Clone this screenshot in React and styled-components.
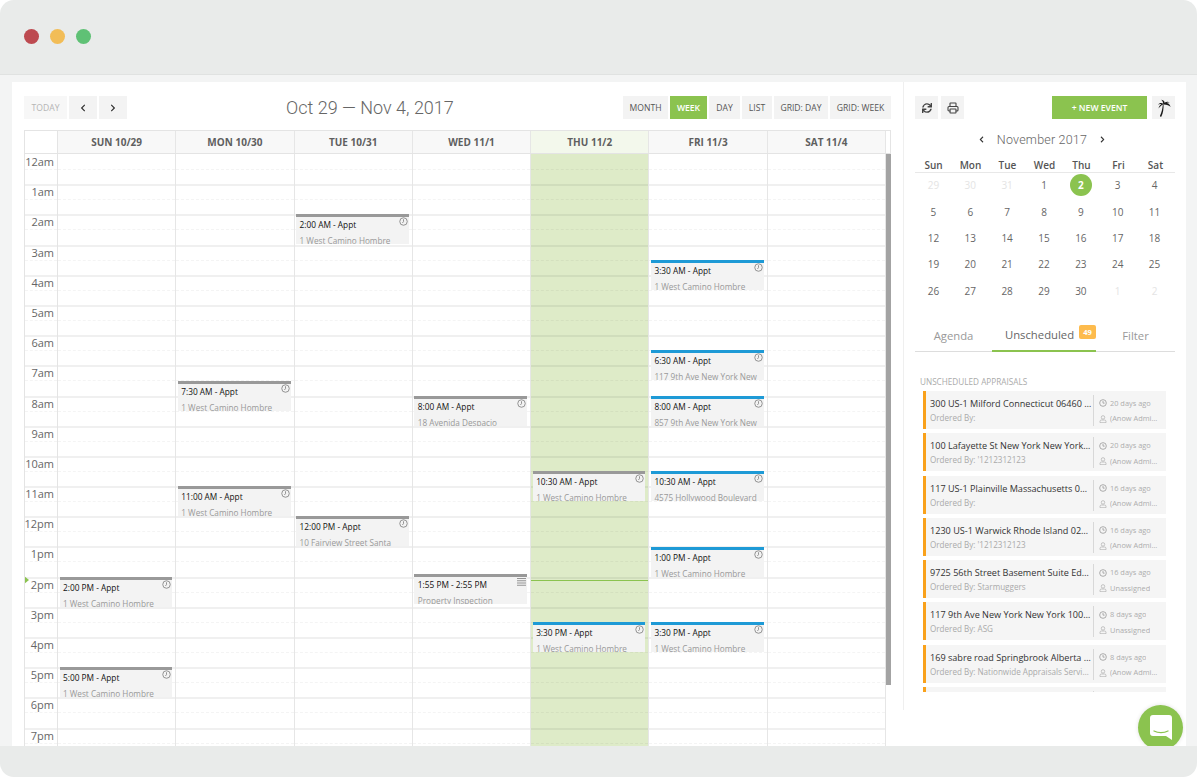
import React from 'react';
import styled, { createGlobalStyle } from 'styled-components';
import { FaSync, FaChevronLeft, FaChevronRight } from 'react-icons/fa';
import { Printer } from 'lucide-react';

const GlobalStyle = createGlobalStyle`
  html, body { margin: 0; padding: 0; background: #fff; }
  * { box-sizing: border-box; }
  body { font-family: "Open Sans", "Liberation Sans", sans-serif; }
`;

const HOUR = 30.2;
const hours = ['12am','1am','2am','3am','4am','5am','6am','7am','8am','9am','10am','11am','12pm','1pm','2pm','3pm','4pm','5pm','6pm','7pm','8pm','9pm','10pm','11pm'];

const Windowed = styled.div`
  position: relative;
  width: 1197px;
  height: 777px;
  display: flex;
  flex-direction: column;
  background: #e9ebea;
  border-radius: 14px;
  overflow: hidden;
`;

const TitleBar = styled.div`
  height: 75px;
  flex: none;
  display: flex;
  align-items: center;
  gap: 11px;
  padding: 0 24px 2px;
  border-bottom: 1px solid #e0e2e1;
`;

const Dot = styled.span`
  width: 15px;
  height: 15px;
  border-radius: 50%;
  background: ${p => p.$color};
`;

const Stage = styled.div`
  flex: none;
  height: 671px;
  background: #f3f4f4;
  padding: 7px 11px 0 12px;
`;

const Panel = styled.div`
  height: 664px;
  background: #fff;
  display: flex;
  overflow: hidden;
`;

const Main = styled.div`
  width: 891px;
  flex: none;
  padding: 14px 12px 0 12px;
  display: flex;
  flex-direction: column;
`;

const Toolbar = styled.div`
  display: flex;
  align-items: center;
  height: 23px;
  flex: none;
  margin-bottom: 11px;
`;

const Group = styled.div`
  display: flex;
  gap: 2px;
  width: ${p => p.$width || 'auto'};
`;

const ToolButton = styled.button`
  height: 23px;
  width: ${p => p.$width}px;
  border: 0;
  padding: 0;
  display: flex;
  align-items: center;
  justify-content: center;
  font-family: "Open Sans", sans-serif;
  font-size: 8.6px;
  color: ${p => (p.$active ? '#fff' : p.$muted ? '#b5b5b5' : '#555')};
  font-weight: ${p => (p.$active ? 600 : 400)};
  background: ${p => (p.$active ? '#8bc34f' : p.$muted ? '#f7f7f7' : '#f3f3f3')};
`;

const RangeTitle = styled.div`
  flex: 1;
  font-family: Roboto, sans-serif;
  font-weight: 300;
  font-size: 18px;
  line-height: 21px;
  color: #666;
`;

const Grid = styled.div`
  flex: 1;
  min-height: 0;
  border-top: 1px solid #e4e4e4;
  border-left: 1px solid #e4e4e4;
  overflow: hidden;
`;

const HeadRow = styled.div`
  display: flex;
  height: 23px;
  border-bottom: 1px solid #e4e4e4;
  border-right: 1px solid #e4e4e4;
`;

const Corner = styled.div`
  width: 33px;
  flex: none;
  border-right: 1px solid #e4e4e4;
`;

const HeadCell = styled.div`
  flex: 1 1 0;
  display: flex;
  align-items: center;
  justify-content: center;
  background: ${p => (p.$today ? '#f3f8ec' : '#f8f8f8')};
  border-right: 1px solid #e6e6e6;
  font-size: 10px;
  font-weight: 700;
  color: #5f5f5f;
`;

const HeadGap = styled.div`
  width: 4px;
  flex: none;
`;

const BodyRow = styled.div`
  display: flex;
  position: relative;
`;

const TimeColumn = styled.div`
  width: 33px;
  flex: none;
  border-right: 1px solid #e4e4e4;
`;

const Slot = styled.div`
  height: ${HOUR}px;
  &:not(:first-child) {
    box-shadow: inset 0 2px 0 rgba(0, 0, 0, 0.06);
  }
  &::before {
    content: '';
    display: block;
    height: 15px;
    border-bottom: 1px dashed rgba(0, 0, 0, 0.045);
  }
`;

const TimeSlot = styled(Slot)`
  position: relative;
`;

const TimeLabel = styled.span`
  position: absolute;
  top: 0;
  right: 3px;
  font-size: 11px;
  line-height: 15px;
  color: #666;
`;

const DayColumn = styled.div`
  flex: 1 1 0;
  min-width: 0;
  position: relative;
  border-right: 1px solid #e6e6e6;
  background: ${p => (p.$today ? '#deebc8' : '#fff')};
`;

const Scroll = styled.div`
  width: 5px;
  flex: none;
  height: 531px;
  background: #a3a3a3;
`;

const NowMarker = styled.div`
  position: absolute;
  left: -1px;
  top: 422px;
  width: 0;
  height: 0;
  border-left: 5px solid #8bc34f;
  border-top: 4px solid transparent;
  border-bottom: 4px solid transparent;
`;

const NowLine = styled.div`
  position: absolute;
  left: 0;
  right: 0;
  top: 426px;
  height: 1px;
  background: #8bc34f;
`;

const Event = styled.div`
  position: absolute;
  left: 1.5px;
  right: 3px;
  height: 30px;
  padding: 2px 0 0 3.5px;
  background: #f3f3f3;
  border-top: 3px solid ${p => (p.$blue ? '#1e9ad6' : '#999')};
  overflow: hidden;
`;

const EventTime = styled.div`
  font-size: 8.3px;
  line-height: 12px;
  color: #111;
  white-space: nowrap;
`;

const EventPlace = styled.div`
  font-size: 8.2px;
  line-height: 12px;
  margin-top: 4px;
  color: #999;
  white-space: nowrap;
`;

const EventIcon = styled.svg`
  position: absolute;
  right: 1px;
  top: 0;
  width: 9px;
  height: 9px;
  color: #808080;
`;

const Side = styled.div`
  width: 283px;
  flex: none;
  height: 628px;
  border-left: 1px solid #efefef;
  padding: 14px 11px 0 11px;
  display: flex;
  flex-direction: column;
`;

const SideTools = styled.div`
  display: flex;
  height: 23px;
  gap: 3px;
  flex: none;
`;

const IconButton = styled.button`
  width: 23px;
  height: 23px;
  border: 0;
  padding: 0;
  display: flex;
  align-items: center;
  justify-content: center;
  background: #f3f3f3;
  color: #444;
`;

const NewEvent = styled.button`
  margin-left: auto;
  margin-right: 2px;
  width: 95px;
  height: 23px;
  border: 0;
  background: #8bc34f;
  color: #fff;
  font-family: "Open Sans", sans-serif;
  font-size: 8.6px;
  font-weight: 600;
`;

const MonthHead = styled.div`
  display: flex;
  justify-content: center;
  align-items: center;
  gap: 12px;
  margin-top: 10px;
  height: 20px;
  color: #333;
  padding-right: 6px;
  flex: none;
`;

const MonthName = styled.span`
  font-family: Roboto, sans-serif;
  font-weight: 300;
  font-size: 12.5px;
  color: #666;
  letter-spacing: 0.2px;
`;

const Weekdays = styled.div`
  display: grid;
  grid-template-columns: repeat(7, 1fr);
  margin-top: 9px;
  padding-right: 1px;
  border-bottom: 1px solid #e8e8e8;
  font-size: 10px;
  line-height: 14px;
  font-weight: 600;
  color: #555;
  text-align: center;
  flex: none;
`;

const Days = styled.div`
  display: grid;
  grid-template-columns: repeat(7, 1fr);
  grid-auto-rows: 26.4px;
  margin: -1px 2px 0 0;
  font-size: 10px;
  text-align: center;
  color: #666;
  flex: none;
`;

const DayCell = styled.div`
  display: flex;
  align-items: center;
  justify-content: center;
  color: ${p => (p.$dim ? '#e4e4e4' : '#666')};
`;

const TodayBadge = styled.span`
  width: 22px;
  height: 22px;
  border-radius: 50%;
  background: #8bc34f;
  color: #fff;
  font-weight: 700;
  display: flex;
  align-items: center;
  justify-content: center;
`;

const Tabs = styled.div`
  display: grid;
  grid-template-columns: 77px 104px 1fr;
  margin-top: 17px;
  height: 31px;
  border-bottom: 1px solid #ddd;
  flex: none;
`;

const Tab = styled.div`
  position: relative;
  display: flex;
  align-items: center;
  justify-content: center;
  padding-bottom: 2px;
  padding-right: ${p => (p.$active ? '9px' : '0')};
  font-size: 11.3px;
  color: ${p => (p.$active ? '#666' : '#999')};
  height: 31px;
  border-bottom: ${p => (p.$active ? '2px solid #8bc34f' : '0')};
`;

const Count = styled.span`
  position: absolute;
  top: 4px;
  right: 0;
  width: 17px;
  height: 14px;
  border-radius: 2px;
  background: #fdbb4d;
  color: #fff;
  font-size: 7.5px;
  font-weight: 700;
  display: flex;
  align-items: center;
  justify-content: center;
`;

const ListTitle = styled.div`
  margin: 24px 0 0 5px;
  font-size: 8.2px;
  line-height: 11px;
  color: #aaa;
  flex: none;
`;

const List = styled.div`
  margin: 4px 9px 0 8px;
  display: flex;
  flex-direction: column;
  gap: 4.3px;
  height: 301px;
  overflow: hidden;
  flex: none;
`;

const Card = styled.div`
  flex: none;
  height: 38px;
  display: flex;
  background: #f5f5f5;
  border-left: 3px solid #f9a11b;
  padding: 4px 0 3px;
`;

const CardMain = styled.div`
  width: 168px;
  flex: none;
  padding: 2px 0 0 4px;
  border-right: 1px solid #d8d8d8;
`;

const Address = styled.div`
  font-size: 9.1px;
  line-height: 13px;
  color: #333;
  white-space: nowrap;
  overflow: hidden;
  text-overflow: ellipsis;
  padding-right: 1px;
`;

const OrderedBy = styled.div`
  font-size: 8.1px;
  line-height: 12px;
  margin-top: 2px;
  color: #aaa;
  white-space: nowrap;
  overflow: hidden;
  text-overflow: ellipsis;
  padding-right: 2px;
`;

const CardMeta = styled.div`
  flex: 1;
  min-width: 0;
  padding: 2px 6px 0 5px;
`;

const MetaLine = styled.div`
  display: flex;
  align-items: center;
  gap: 3px;
  font-size: 7.4px;
  line-height: 13px;
  margin-bottom: 2.5px;
  color: #adadad;
  white-space: nowrap;
  overflow: hidden;
`;

const MetaText = styled.span`
  overflow: hidden;
  text-overflow: ellipsis;
`;

const Fab = styled.div`
  position: absolute;
  left: 1138px;
  top: 705px;
  width: 45px;
  height: 45px;
  border-radius: 50%;
  background: #8bc34f;
  box-shadow: 0 0 4px rgba(0, 0, 0, 0.12);
  display: flex;
  align-items: center;
  justify-content: center;
  clip-path: inset(-6px -6px 4px -6px);
`;

const ClockIcon = () => (
  <svg width="8" height="8" viewBox="0 0 12 12" fill="none" stroke="#999" strokeWidth="1.2" style={{ flex: 'none' }}>
    <circle cx="6" cy="6" r="5" />
    <path d="M6 3v3.200h2.400" />
  </svg>
);

const UserIcon = () => (
  <svg width="8" height="8" viewBox="0 0 12 12" fill="none" stroke="#aaa" strokeWidth="1" style={{ flex: 'none' }}>
    <circle cx="6" cy="3.600" r="2.600" />
    <path d="M1.500 11.500V9.500c0-1.400 1-2 2-2h5c1 0 2 .6 2 2v2z" />
  </svg>
);

const PalmIcon = () => (
  <svg width="14" height="18" viewBox="0 0 14 18" fill="#1c1c1c">
    <path d="M5.800 5.500c-.3 4-1.200 8-2.900 11.600 0 .5.900.9 1.500.4 1.800-3.600 2.300-8 2.200-12z" />
    <path d="M6.600 5.200C5 3.400 2.800 3.400.8 5.600c1.400-.6 2.700-.7 3.500-.4C2.900 6 1.700 7.400 1.600 9.600c1-1.800 2.600-3.400 5-4.400z" />
    <path d="M6.400 5.400C7.200 3 9.800 1.900 13 3.200c-1.500 0-2.700.2-3.500.7 1.900.1 3.500 1.500 4.200 4.100C12.200 6.300 9.800 5.300 6.400 5.400z" />
    <path d="M6.200 5.300C6.200 3.300 5.600 1.800 4 .8c1.900.1 3.300 1 3.600 2.400.1.900-.4 1.600-1.400 2.100z" />
  </svg>
);

const ChatIcon = () => (
  <svg width="22" height="25" viewBox="0 0 22 25">
    <path d="M3 0h16a3 3 0 0 1 3 3v22l-6-4H3a3 3 0 0 1-3-3V3a3 3 0 0 1 3-3z" fill="#fff" />
    <path d="M4 16c4 2 10 2 14 0" fill="none" stroke="#8bc34f" strokeWidth="1.300" strokeLinecap="round" />
  </svg>
);

const week = [
  { label: 'SUN 10/29', events: [
    { h: 14, time: '2:00 PM - Appt', place: '1 West Camino Hombre' },
    { h: 17, time: '5:00 PM - Appt', place: '1 West Camino Hombre' },
  ] },
  { label: 'MON 10/30', events: [
    { h: 7.5, time: '7:30 AM - Appt', place: '1 West Camino Hombre' },
    { h: 11, time: '11:00 AM - Appt', place: '1 West Camino Hombre' },
  ] },
  { label: 'TUE 10/31', events: [
    { h: 2, time: '2:00 AM - Appt', place: '1 West Camino Hombre' },
    { h: 12, time: '12:00 PM - Appt', place: '10 Fairview Street Santa' },
  ] },
  { label: 'WED 11/1', events: [
    { h: 8, time: '8:00 AM - Appt', place: '18 Avenida Despacio' },
    { h: 13.92, time: '1:55 PM - 2:55 PM', place: 'Property Inspection', list: true },
  ] },
  { label: 'THU 11/2', today: true, events: [
    { h: 10.5, time: '10:30 AM - Appt', place: '1 West Camino Hombre' },
    { h: 15.5, time: '3:30 PM - Appt', place: '1 West Camino Hombre', blue: true },
  ] },
  { label: 'FRI 11/3', events: [
    { h: 3.5, time: '3:30 AM - Appt', place: '1 West Camino Hombre', blue: true },
    { h: 6.5, time: '6:30 AM - Appt', place: '117 9th Ave New York New', blue: true },
    { h: 8, time: '8:00 AM - Appt', place: '857 9th Ave New York New', blue: true },
    { h: 10.5, time: '10:30 AM - Appt', place: '4575 Hollywood Boulevard', blue: true },
    { h: 13, time: '1:00 PM - Appt', place: '1 West Camino Hombre', blue: true },
    { h: 15.5, time: '3:30 PM - Appt', place: '1 West Camino Hombre', blue: true },
  ] },
  { label: 'SAT 11/4', events: [] },
];

const views = [
  { label: 'MONTH', width: 45 },
  { label: 'WEEK', width: 37, active: true },
  { label: 'DAY', width: 31 },
  { label: 'LIST', width: 30 },
  { label: 'GRID: DAY', width: 54 },
  { label: 'GRID: WEEK', width: 61 },
];

const calendarDays = [
  [29, 1], [30, 1], [31, 1], [1], [2, 0, 1], [3], [4],
  [5], [6], [7], [8], [9], [10], [11],
  [12], [13], [14], [15], [16], [17], [18],
  [19], [20], [21], [22], [23], [24], [25],
  [26], [27], [28], [29], [30], [1, 1], [2, 1],
];

const appraisals = [
  { address: '300 US-1 Milford Connecticut 06460 United States', by: 'Ordered By:', age: '20 days ago', who: '(Anow Administrator)' },
  { address: '100 Lafayette St New York New York 10013', by: "Ordered By: '1212312123", age: '20 days ago', who: '(Anow Administrator)' },
  { address: '117 US-1 Plainville Massachusetts 02762', by: 'Ordered By:', age: '16 days ago', who: '(Anow Administrator)' },
  { address: '1230 US-1 Warwick Rhode Island 02886', by: "Ordered By: '1212312123", age: '16 days ago', who: '(Anow Administrator)' },
  { address: '9725 56th Street Basement Suite Edmonton', by: 'Ordered By: Starmuggers', age: '16 days ago', who: 'Unassigned' },
  { address: '117 9th Ave New York New York 10011', by: 'Ordered By: ASG', age: '8 days ago', who: 'Unassigned' },
  { address: '169 sabre road Springbrook Alberta Canada', by: 'Ordered By: Nationwide Appraisals Services', age: '8 days ago', who: '(Anow Administrator)' },
  { address: '', by: '', age: '', who: '' },
];

export default function App() {
  return (
    <Windowed>
      <GlobalStyle />
      <TitleBar>
        <Dot $color="#bd4a50" />
        <Dot $color="#f2bd57" />
        <Dot $color="#5fc175" />
      </TitleBar>
      <Stage>
        <Panel>
          <Main>
            <Toolbar>
              <Group $width="262px">
                <ToolButton $width={43} $muted>TODAY</ToolButton>
                <ToolButton $width={28}><FaChevronLeft size={8} color="#333" /></ToolButton>
                <ToolButton $width={28}><FaChevronRight size={8} color="#333" /></ToolButton>
              </Group>
              <RangeTitle>Oct 29 — Nov 4, 2017</RangeTitle>
              <Group>
                {views.map(v => (
                  <ToolButton key={v.label} $width={v.width} $active={v.active}>{v.label}</ToolButton>
                ))}
              </Group>
            </Toolbar>
            <Grid>
              <HeadRow>
                <Corner />
                {week.map(d => <HeadCell key={d.label} $today={d.today}>{d.label}</HeadCell>)}
                <HeadGap />
              </HeadRow>
              <BodyRow>
                <TimeColumn>
                  {hours.map(h => <TimeSlot key={h}><TimeLabel>{h}</TimeLabel></TimeSlot>)}
                </TimeColumn>
                <NowMarker />
                {week.map(d => (
                  <DayColumn key={d.label} $today={d.today}>
                    {hours.map(h => <Slot key={h} />)}
                    {d.today && <NowLine />}
                    {d.events.map(e => (
                      <Event key={e.time} $blue={e.blue} style={{ top: e.h * HOUR }}>
                        <EventTime>{e.time}</EventTime>
                        <EventPlace>{e.place}</EventPlace>
                        <EventIcon viewBox="0 0 12 12" fill="none" stroke="currentColor" strokeWidth="1.100">
                          {e.list ? (
                            <path d="M0 2h12M0 5h12M0 8h12M0 11h12" />
                          ) : (
                            <>
                              <circle cx="6" cy="6" r="5" />
                              <path d="M6 3v3.200L4.500 8" />
                            </>
                          )}
                        </EventIcon>
                      </Event>
                    ))}
                  </DayColumn>
                ))}
                <Scroll />
              </BodyRow>
            </Grid>
          </Main>
          <Side>
            <SideTools>
              <IconButton><FaSync size={10} /></IconButton>
              <IconButton><Printer size={12} strokeWidth={2.2} /></IconButton>
              <NewEvent>+ NEW EVENT</NewEvent>
              <IconButton><PalmIcon /></IconButton>
            </SideTools>
            <MonthHead>
              <FaChevronLeft size={7} />
              <MonthName>November 2017</MonthName>
              <FaChevronRight size={7} />
            </MonthHead>
            <Weekdays>
              {['Sun', 'Mon', 'Tue', 'Wed', 'Thu', 'Fri', 'Sat'].map(d => <span key={d}>{d}</span>)}
            </Weekdays>
            <Days>
              {calendarDays.map(([n, dim, today], i) => (
                <DayCell key={i} $dim={dim}>
                  {today ? <TodayBadge>{n}</TodayBadge> : n}
                </DayCell>
              ))}
            </Days>
            <Tabs>
              <Tab>Agenda</Tab>
              <Tab $active>Unscheduled<Count>49</Count></Tab>
              <Tab>Filter</Tab>
            </Tabs>
            <ListTitle>UNSCHEDULED APPRAISALS</ListTitle>
            <List>
              {appraisals.map((a, i) => (
                <Card key={i}>
                  <CardMain>
                    <Address>{a.address}</Address>
                    <OrderedBy>{a.by}</OrderedBy>
                  </CardMain>
                  <CardMeta>
                    {a.age && <MetaLine><ClockIcon /><MetaText>{a.age}</MetaText></MetaLine>}
                    {a.who && <MetaLine><UserIcon /><MetaText>{a.who}</MetaText></MetaLine>}
                  </CardMeta>
                </Card>
              ))}
            </List>
          </Side>
        </Panel>
      </Stage>
      <Fab><ChatIcon /></Fab>
    </Windowed>
  );
}
